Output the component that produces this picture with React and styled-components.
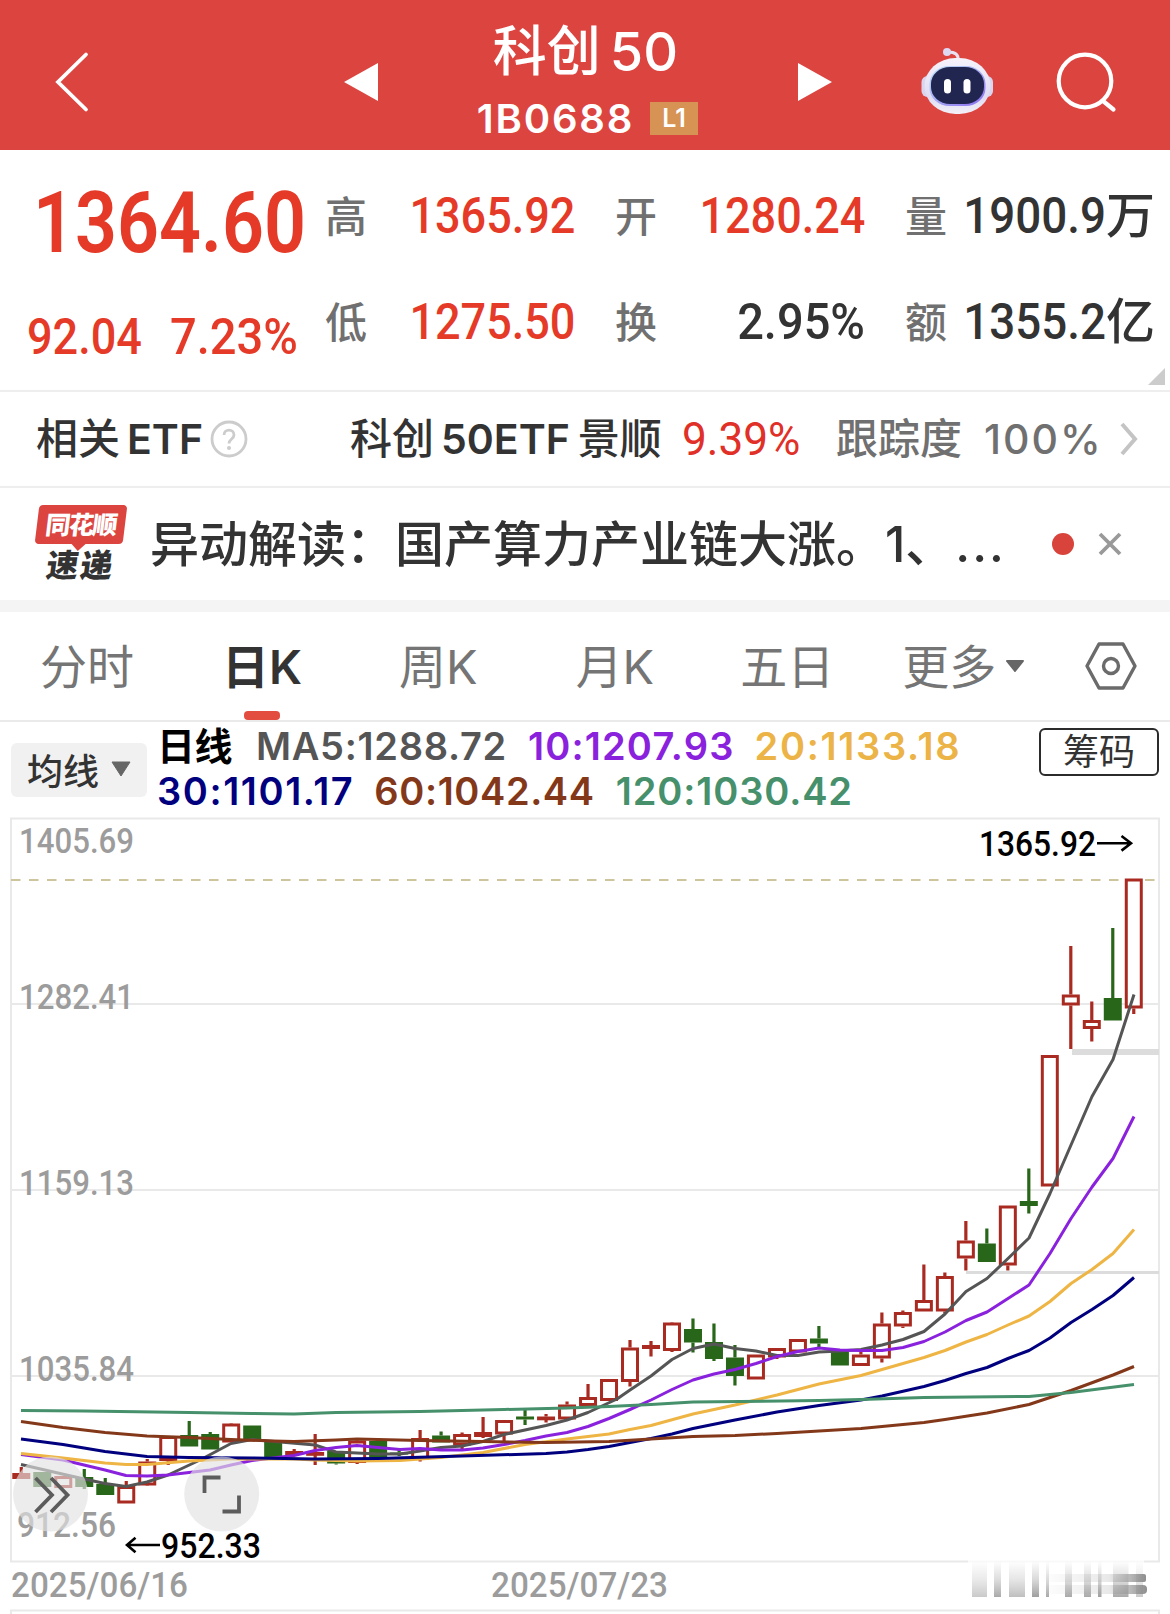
import React from 'react'
import styled, { createGlobalStyle } from 'styled-components'

const sans = `Inter, "Noto Sans CJK SC", sans-serif`
const din = `Roboto, "Noto Sans CJK SC", sans-serif`

// every candle: up / down, high, body top, body bottom, low
const candles = [
  ['u', 1467, 1473, 1479, 1479],
  ['d', 1472, 1472, 1487, 1487],
  ['u', 1476, 1476, 1488, 1488],
  ['d', 1469, 1477, 1487, 1489],
  ['d', 1478, 1484, 1495, 1495],
  ['u', 1481, 1486, 1503.5, 1503.5],
  ['u', 1459, 1461.5, 1485.5, 1486],
  ['u', 1436, 1436, 1461, 1465],
  ['d', 1421, 1435, 1446.5, 1446.5],
  ['d', 1432, 1434, 1449.5, 1449.5],
  ['u', 1423, 1423.5, 1442.5, 1442.5],
  ['d', 1425.5, 1425.5, 1439.5, 1439.5],
  ['d', 1441, 1441, 1457, 1457],
  ['u', 1449, 1451, 1455, 1455],
  ['u', 1434, 1452, 1455, 1465],
  ['d', 1451, 1451, 1463.5, 1464.5],
  ['u', 1440, 1440.5, 1463, 1464],
  ['d', 1441, 1441, 1459, 1459],
  ['d', 1450, 1452.5, 1454.5, 1456],
  ['u', 1430, 1438, 1460, 1461.5],
  ['d', 1431.5, 1435.5, 1442.5, 1442.5],
  ['u', 1432.5, 1434, 1445.5, 1449],
  ['u', 1417, 1432, 1437, 1438],
  ['u', 1420, 1420, 1434.5, 1441.5],
  ['d', 1410, 1416.5, 1419.5, 1425],
  ['u', 1414, 1416.5, 1420, 1422.5],
  ['u', 1401.5, 1404.5, 1419.5, 1419.5],
  ['u', 1384, 1397, 1406, 1406],
  ['u', 1379, 1379, 1401, 1401],
  ['u', 1340, 1347.5, 1382, 1386.5],
  ['u', 1341, 1345, 1349, 1356.5],
  ['u', 1322, 1322.5, 1351, 1352],
  ['d', 1318.5, 1329, 1342.5, 1352.5],
  ['d', 1323.5, 1342, 1359, 1361],
  ['d', 1345, 1357.5, 1376, 1385.5],
  ['u', 1354.5, 1354.5, 1379.5, 1379.5],
  ['u', 1348, 1348, 1357.5, 1359],
  ['u', 1339, 1339, 1352.5, 1352.5],
  ['d', 1326, 1338.5, 1343.5, 1347],
  ['d', 1351.5, 1351.5, 1365.5, 1365.5],
  ['u', 1352, 1354.5, 1366, 1366],
  ['u', 1312.5, 1323.5, 1358.5, 1362.5],
  ['u', 1310.5, 1312, 1326.5, 1328],
  ['u', 1264.5, 1300, 1311.5, 1311.5],
  ['u', 1272.5, 1276, 1311.5, 1313],
  ['u', 1221, 1240.5, 1258.5, 1270.5],
  ['d', 1228.5, 1243.5, 1262, 1262],
  ['u', 1205.5, 1205.5, 1265.5, 1270.5],
  ['d', 1168.5, 1201, 1206, 1213.5],
  ['u', 1055, 1055, 1186.5, 1186.5],
  ['u', 946, 994.5, 1005.5, 1049],
  ['u', 1001.5, 1020, 1029, 1041.5],
  ['d', 928, 998, 1020.5, 1020.5],
  ['u', 878.5, 878.5, 1008.5, 1014],
]

const averages = [
  { color: '#555555', points: '21,1464.5 84,1479 105,1483.5 126,1486.5 147,1482 168,1475 200,1460 231,1443.5 252,1439.5 315,1445 336,1452 357,1453 378,1454 400,1454 420,1451 441,1447.5 462,1446 483,1441.5 504,1434.5 525,1430 546,1425.5 567,1420 588,1412.5 617,1399 630,1390 651,1376 672,1359.5 693,1348.5 714,1344 735,1348.5 756,1351 777,1355.5 798,1355.5 819,1352 840,1351 861,1349.5 882,1345 903,1339.5 924,1331.5 945,1314 966,1291.5 987,1278.5 1008,1258.5 1029,1238 1050,1193.5 1071,1145 1092,1096.5 1113,1059.5 1134,994.5' },
  { color: '#8a22dd', points: '21,1454.5 63,1460 84,1465 105,1470 126,1475.5 147,1476 168,1475 210,1470 231,1465 252,1460.5 294,1455.5 315,1450.5 336,1447.5 357,1445.5 378,1447.5 400,1449.5 420,1448.5 441,1450 462,1450 483,1448 504,1444.5 525,1440.5 546,1436 567,1432.5 588,1426.5 609,1418.5 630,1409.5 651,1400 672,1389.5 693,1380 714,1374 735,1369.5 756,1363.5 777,1356.5 798,1351.5 819,1348 840,1350 861,1350.5 882,1350.5 903,1347.5 924,1341.5 945,1332 966,1320.5 987,1312 1008,1298.5 1029,1285 1050,1253.5 1071,1218.5 1092,1187 1113,1158.5 1134,1116.5' },
  { color: '#eeb544', points: '21,1453.5 63,1458 105,1463 126,1464.5 147,1464.5 189,1461 231,1459 294,1459 315,1460 357,1461 400,1460.5 441,1457.5 483,1452.5 525,1444.5 567,1439 609,1434 630,1429.5 651,1425.5 693,1414 735,1405 777,1395 819,1384 861,1375.5 882,1369.5 924,1357.5 945,1350.5 966,1342 987,1334.5 1008,1325 1029,1316 1050,1301.5 1071,1283.5 1092,1269.5 1113,1253.5 1134,1229.5' },
  { color: '#00007f', points: '21,1439 63,1444.5 105,1451.5 147,1456.5 189,1457.5 252,1458 315,1459 378,1458.5 462,1456 546,1453.5 567,1452 588,1449.5 609,1446.5 630,1442.5 651,1438.5 672,1434 693,1428.5 735,1420 777,1412 819,1405.5 861,1400 882,1396 924,1386.5 945,1380.5 966,1373.5 987,1367.5 1008,1358.5 1029,1350.5 1050,1338 1071,1322.5 1092,1309.5 1113,1295.5 1134,1277.5' },
  { color: '#84381a', points: '21,1421.5 63,1427.5 105,1432.5 147,1436 189,1437.5 231,1439.5 273,1441 294,1441.5 336,1440 357,1439 420,1440.5 483,1441.5 546,1442.5 609,1441.5 651,1439 693,1436.5 735,1435.5 777,1433.5 819,1431 861,1428.5 924,1422.5 945,1419.5 987,1413 1029,1404.5 1071,1390.5 1113,1375 1134,1366.5' },
  { color: '#46906c', points: '21,1410.5 84,1411 189,1412.5 252,1413.5 294,1414 336,1412.5 420,1411.5 504,1409.5 567,1408 609,1406.5 651,1404.5 693,1402 819,1400.5 861,1399.5 924,1397.5 1029,1396.5 1071,1392.5 1134,1384.5' },
]

const quotes = [
  { label: '高', value: '1365.92', up: true },
  { label: '开', value: '1280.24', up: true },
  { label: '量', value: '1900.9', unit: '万', squeeze: 0.915 },
  { label: '低', value: '1275.50', up: true },
  { label: '换', value: '2.95%', squeeze: 0.94 },
  { label: '额', value: '1355.2', unit: '亿', squeeze: 0.915 },
]

// baselines of the price labels on the left side
const prices = [
  ['1405.69', 853, 115],
  ['1282.41', 1008.5, 115],
  ['1159.13', 1194.5, 115],
  ['1035.84', 1380.5, 115],
]

// x, width and opacity of the smudged bars covering the last date
const smudges = [[972, 15, 0.5], [994, 7, 0.8], [1009, 16, 0.6], [1032, 7, 0.9], [1046, 3, 0.8], [1065, 7, 0.8], [1084, 7, 0.8], [1098, 3.5, 0.9], [1113, 15.5, 0.8], [1136, 7, 0.5]]

function Robot() {
  return (
    <svg width="74" height="70" viewBox="920 47 74 70">
      <defs>
        <linearGradient id="shell" x1="0" y1="0" x2="0" y2="1">
          <stop offset="0" stopColor="#f6f2fb" />
          <stop offset=".7" stopColor="#dfdcf3" />
          <stop offset="1" stopColor="#f3f0f8" />
        </linearGradient>
        <linearGradient id="rim" x1="0" y1="0" x2="1" y2="1">
          <stop offset="0" stopColor="#bfe4f5" />
          <stop offset="1" stopColor="#8b6cf0" />
        </linearGradient>
      </defs>
      <path d="M958 60 Q959 52 948 52" fill="none" stroke="#e9e0f2" strokeWidth="3" />
      <circle cx="947" cy="52" r="4" fill="#ded9f3" />
      <rect x="921.5" y="76" width="13" height="21" rx="6" fill="#d9d5ef" />
      <rect x="980" y="76" width="13" height="21" rx="6" fill="#d9d5ef" />
      <rect x="924.5" y="58" width="66" height="56" rx="31" ry="28" fill="url(#shell)" />
      <rect x="929.5" y="66" width="56" height="40" rx="20" ry="18" fill="url(#rim)" />
      <rect x="931" y="67" width="53" height="37" rx="19" ry="17" fill="#20264f" />
      <rect x="944" y="79" width="7" height="14.5" rx="3.5" fill="#fff" />
      <rect x="963.5" y="79" width="7" height="14.5" rx="3.5" fill="#fff" />
    </svg>
  )
}

function KChart() {
  return (
    <ChartSvg viewBox="0 817 1170 797">
      <defs>
        <linearGradient id="smudge" x1="0" y1="0" x2="0" y2="1">
          <stop offset="0" stopColor="#999" stopOpacity="0" />
          <stop offset=".5" stopColor="#999" stopOpacity=".4" />
          <stop offset="1" stopColor="#888" stopOpacity=".9" />
        </linearGradient>
        <linearGradient id="streak" x1="0" y1="0" x2="1" y2="0">
          <stop offset="0" stopColor="#999" stopOpacity="0" />
          <stop offset=".65" stopColor="#999" stopOpacity=".22" />
          <stop offset="1" stopColor="#888" stopOpacity=".95" />
        </linearGradient>
      </defs>
      <g fill="none" stroke="#e9e9e9" strokeWidth="2">
        <rect x="11" y="818.5" width="1148" height="743" />
        <path d="M11 1614 V1610.5 H1159 V1614" />
        <path d="M12 1004 H1158 M12 1190 H1158 M12 1376 H1158" />
      </g>
      <rect x="1072" y="1049" width="87" height="6" fill="#dcdcdc" />
      <rect x="966" y="1271" width="193" height="3" fill="#dcdcdc" />
      <path d="M11 880 H1158" stroke="#cfc59d" strokeWidth="2" strokeDasharray="9.5 8.5" />

      {prices.map(([text, y, width]) => (
        <AxisText key={text} x="19" y={y} textLength={width} lengthAdjust="spacingAndGlyphs">{text}</AxisText>
      ))}
      <AxisText x="17" y="1537" textLength="99" lengthAdjust="spacingAndGlyphs">912.56</AxisText>

      {candles.map(([dir, high, top, bottom, low], i) => {
        const x = 21.3 + i * 20.99
        const up = dir === 'u'
        const color = up ? '#a92a20' : '#28661a'
        const inner = up ? Math.max(bottom - top - 3, 0.8) : bottom - top
        return (
          <g key={i}>
            <path d={`M${x} ${high} V${top} M${x} ${bottom} V${low}`} stroke={color} strokeWidth="3.2" />
            {up
              ? <rect x={x - 7.5} y={top + 1.5} width="15" height={inner} fill="#fff" stroke={color} strokeWidth="3" />
              : <rect x={x - 9} y={top} width="18" height={inner} fill={color} />}
          </g>
        )
      })}
      {averages.map(line => (
        <polyline key={line.color} points={line.points} fill="none" stroke={line.color} strokeWidth="3" strokeLinejoin="round" />
      ))}

      <MarkText x="979" y="856" textLength="117" lengthAdjust="spacingAndGlyphs">1365.92</MarkText>
      <path d="M1097 843.3 H1131 M1121.5 836 L1131 843.3 L1121.5 850.6" fill="none" stroke="#000" strokeWidth="2.6" />
      <MarkText x="161" y="1558" textLength="100" lengthAdjust="spacingAndGlyphs">952.33</MarkText>
      <path d="M160 1545 H127 M135.5 1537.7 L127 1545 L135.5 1552.3" fill="none" stroke="#000" strokeWidth="2.6" />

      <AxisText x="11" y="1597" textLength="177" lengthAdjust="spacingAndGlyphs">2025/06/16</AxisText>
      <AxisText x="491" y="1597" textLength="177" lengthAdjust="spacingAndGlyphs">2025/07/23</AxisText>
      <rect x="968" y="1559" width="176" height="8" fill="#fff" opacity=".7" />
      {smudges.map(([x, width, opacity]) => (
        <rect key={x} x={x} y="1561" width={width} height="36" fill="url(#smudge)" opacity={opacity} />
      ))}
      <rect x="1040" y="1574" width="106" height="8" rx="2" fill="url(#streak)" />
      <rect x="1040" y="1585" width="107" height="9" rx="4" fill="url(#streak)" />

      <circle cx="50.5" cy="1494" r="37.5" fill="#e2e2e2" fillOpacity=".65" />
      <path d="M35.5 1478 L52 1495 L35.5 1512 M51 1478 L67.5 1495 L51 1512" fill="none" stroke="#5c5c5c" strokeWidth="3.8" />
      <circle cx="221.7" cy="1494" r="37.5" fill="#e2e2e2" fillOpacity=".65" />
      <path d="M204.5 1493 V1477.5 H220.5 M239 1495.5 V1511.5 H222.5" fill="none" stroke="#5c5c5c" strokeWidth="3.8" />
    </ChartSvg>
  )
}

function App() {
  return (
    <Page>
      <GlobalStyle />
      <Header>
        <svg width="34" height="62" viewBox="55 51 34 62">
          <path d="M86 54.5 L58 82 L86 109.5" fill="none" stroke="#fff" strokeWidth="3.8" strokeLinecap="round" />
        </svg>
        <Switcher>
          <svg width="34" height="38" viewBox="0 0 34 38"><path d="M0 19 L34 0 V38 Z" fill="#fff" /></svg>
          <Heading>
            <Name>科创<b>50</b></Name>
            <Code>1B0688<Level>L1</Level></Code>
          </Heading>
          <svg width="34" height="38" viewBox="0 0 34 38"><path d="M34 19 L0 0 V38 Z" fill="#fff" /></svg>
        </Switcher>
        <Robot />
        <svg width="62" height="62" viewBox="1055 51 62 62">
          <path d="M1103 101 L1113.5 109.5" stroke="#fff" strokeWidth="4.2" strokeLinecap="round" />
          <circle cx="1085" cy="81" r="26.3" fill="none" stroke="#fff" strokeWidth="4.2" />
        </svg>
      </Header>

      <Stats>
        <Latest>
          <Price>1364.60</Price>
          <Change>
            <Digits $up $left>92.04</Digits>
            <Digits $up $left $squeeze={0.94}>7.23%</Digits>
          </Change>
        </Latest>
        <Quotes>
          {quotes.map(q => (
            <Quote key={q.label}>
              <Label>{q.label}</Label>
              <Value><Digits $up={q.up} $squeeze={q.squeeze}>{q.value}</Digits>{q.unit && <Unit>{q.unit}</Unit>}</Value>
            </Quote>
          ))}
        </Quotes>
        <Corner />
      </Stats>

      <Etf>
        <Strong>相关<b>ETF</b></Strong>
        <Help width="38" height="38" viewBox="0 0 38 38">
          <circle cx="19" cy="19" r="17" fill="none" stroke="#ccc" strokeWidth="2.8" />
          <path d="M14 15 C14 8.5 24 8.5 24 15 C24 19 19 19 19 23.5" fill="none" stroke="#ccc" strokeWidth="2.8" />
          <circle cx="19" cy="28" r="2" fill="#ccc" />
        </Help>
        <Fund>科创<b>50ETF</b><b>景顺</b></Fund>
        <Gain>9.39%</Gain>
        <Track>跟踪度<span>100%</span></Track>
        <svg width="18" height="34" viewBox="0 0 18 34"><path d="M2 2 L15 17 L2 32" fill="none" stroke="#c4c4c4" strokeWidth="4" /></svg>
      </Etf>

      <News>
        <Brand>
          <BrandTop>同花顺</BrandTop>
          <BrandBottom>速递</BrandBottom>
        </Brand>
        <Headline>异动解读：国产算力产业链大涨。1、<Dots>...</Dots></Headline>
        <Dot />
        <svg width="24" height="24" viewBox="0 0 24 24"><path d="M2 2 L22 22 M22 2 L2 22" stroke="#999" strokeWidth="3.8" /></svg>
      </News>

      <Tabs>
        <Tab $gap={88}>分时</Tab>
        <Tab $active $gap={97}>日K</Tab>
        <Tab $gap={98}>周K</Tab>
        <Tab $gap={86}>月K</Tab>
        <Tab $gap={68}>五日</Tab>
        <Tab $gap={10}>更多</Tab>
        <svg width="18" height="12" viewBox="0 0 18 12"><path d="M1 1 H17 L9 11 Z" fill="#666" stroke="#666" strokeWidth="2" strokeLinejoin="round" /></svg>
        <Gear width="52" height="48" viewBox="0 0 52 48">
          <path d="M14 2 H38 L50 24 L38 46 H14 L2 24 Z" fill="none" stroke="#6b6b6b" strokeWidth="3.4" strokeLinejoin="round" />
          <circle cx="26" cy="24" r="7.5" fill="none" stroke="#6b6b6b" strokeWidth="3.4" />
        </Gear>
      </Tabs>

      <Legend>
        <Picker>
          均线
          <svg width="20" height="16" viewBox="0 0 20 16"><path d="M1 1 H19 L10 15 Z" fill="#666" stroke="#666" strokeLinejoin="round" /></svg>
        </Picker>
        <Lines>
          <Line>
            <Ma $color="#000" $gap={24} $space={-0.5}>日线</Ma>
            <Ma $color="#555" $gap={21} $space={0.7}>MA5:1288.72</Ma>
            <Ma $color="#8a22dd" $gap={20} $space={1.2}>10:1207.93</Ma>
            <Ma $color="#ecb346" $space={1.7}>20:1133.18</Ma>
          </Line>
          <Line>
            <Ma $color="#00007f" $gap={20} $space={1.6}>30:1101.17</Ma>
            <Ma $color="#84381a" $gap={21} $space={0.6}>60:1042.44</Ma>
            <Ma $color="#46906c" $space={0.9}>120:1030.42</Ma>
          </Line>
        </Lines>
        <Chips>筹码</Chips>
      </Legend>
      <KChart />
    </Page>
  )
}

export default App


const GlobalStyle = createGlobalStyle`
  * {
    box-sizing: border-box;
  }
  body {
    margin: 0;
    background: #fff;
  }
  svg {
    display: block;
    flex: none;
  }
`

const Page = styled.div`
  width: 1170px;
  height: 1614px;
  overflow: hidden;
  background: #fff;
  font-family: ${sans};
  color: #333;
  white-space: nowrap;
`

const Header = styled.header`
  display: flex;
  align-items: center;
  height: 150px;
  padding: 14px 53px 0 55px;
  background: #dc4440;
  color: #fff;
  > svg:nth-of-type(2) {
    margin: 0 61px 0 88px;
  }
`

const Switcher = styled.div`
  display: flex;
  align-items: center;
  justify-content: space-between;
  width: 488px;
  margin-left: 255px;
`

const Heading = styled.div`
  display: flex;
  flex-direction: column;
  align-items: flex-start;
  margin: -15px 0 0 -1px;
`

const Name = styled.div`
  height: 76px;
  margin: 12px 0 0 16px;
  font-size: 54px;
  font-weight: 500;
  line-height: 76px;
  > b {
    font-weight: 500;
    margin-left: 9px;
  }
`

const Code = styled.div`
  display: flex;
  align-items: center;
  font-size: 40px;
  font-weight: 600;
  line-height: 57px;
  letter-spacing: 1.8px;
`

const Level = styled.span`
  width: 48px;
  height: 33px;
  margin-left: 16px;
  background: #d69354;
  font-size: 25px;
  line-height: 33px;
  letter-spacing: 0;
  text-align: center;
`

const Stats = styled.section`
  position: relative;
  display: flex;
  height: 242px;
  border-bottom: 2px solid #eee;
`

const Latest = styled.div`
  width: 325px;
  padding: 23px 0 0 33px;
`

const Price = styled.div`
  font: 600 85px/100px ${din};
  color: #e53a28;
  transform: scaleX(0.865);
  transform-origin: left;
`

const Change = styled.div`
  display: flex;
  gap: 15px;
  margin: 34px 0 0 -6px;
  height: 60px;
`

const Digits = styled.span`
  display: inline-block;
  font: 500 50px/60px ${din};
  color: ${p => (p.$up ? '#e53a28' : '#333')};
  transform: scaleX(${p => p.$squeeze || 0.9});
  transform-origin: ${p => (p.$left ? 'left' : 'right')};
`

const Quotes = styled.div`
  display: grid;
  grid-template-columns: repeat(3, 250px);
  grid-auto-rows: 106px;
  column-gap: 40px;
  padding-top: 13px;
`

const Quote = styled.div`
  display: flex;
  align-items: center;
  justify-content: space-between;
`

const Label = styled.span`
  width: 42px;
  padding-top: 2px;
  font-size: 42px;
  font-weight: 500;
  line-height: 60px;
  color: #707070;
`

const Value = styled.span`
  display: flex;
  justify-content: flex-end;
  align-items: center;
  width: 200px;
`

const Unit = styled.span`
  font-size: 49px;
  font-weight: 500;
  line-height: 62px;
`

const Corner = styled.i`
  position: absolute;
  right: 5px;
  bottom: 5px;
  border-style: solid;
  border-width: 0 0 17px 17px;
  border-color: transparent transparent #ccc transparent;
`

const Etf = styled.section`
  display: flex;
  align-items: center;
  height: 96px;
  padding: 0 34px 0 36px;
  border-bottom: 2px solid #eee;
  font-size: 42px;
  line-height: 60px;
`

const Strong = styled.span`
  flex: none;
  width: 174px;
  font-weight: 500;
  > b {
    margin-left: 7px;
    font-size: 41px;
    font-weight: 600;
  }
`

const Help = styled.svg`
  margin-right: 102px;
`

const Fund = styled(Strong)`
  width: 332px;
  > b:last-child {
    font-size: 42px;
    font-weight: 500;
    margin-left: 8px;
  }
`

const Gain = styled.span`
  flex: none;
  width: 154px;
  font: 400 46px/60px ${din};
  color: #e03028;
  transform: scaleX(0.96);
  transform-origin: left;
`

const Track = styled.span`
  flex: none;
  width: 284px;
  font-weight: 500;
  color: #707070;
  > span {
    margin-left: 22px;
    font-size: 41px;
    letter-spacing: 2px;
  }
`

const News = styled.section`
  display: flex;
  align-items: center;
  height: 124px;
  padding-left: 37px;
  border-bottom: 12px solid #f4f4f4;
`

const Brand = styled.div`
  width: 88px;
  margin: -1px 25px 0 0;
  text-align: center;
`

const BrandTop = styled.div`
  position: relative;
  height: 39px;
  border-radius: 4px;
  background: #dc4440;
  color: #fff;
  font-size: 25px;
  font-weight: 900;
  line-height: 41px;
  letter-spacing: -1.5px;
  transform: skewX(-7deg);
  &:after {
    content: '';
    position: absolute;
    left: 36px;
    top: 38px;
    border: 8px solid transparent;
    border-top-color: #dc4440;
    border-bottom: 0;
  }
`

const BrandBottom = styled.div`
  margin: 5px 0 0 -1px;
  font-size: 32px;
  font-weight: 900;
  line-height: 34px;
  letter-spacing: 2px;
  transform: skewX(-8deg);
`

const Headline = styled.div`
  width: 902px;
  padding-top: 1px;
  font-size: 49px;
  font-weight: 500;
  line-height: 70px;
`

const Dots = styled.span`
  margin-left: 1px;
  letter-spacing: 2px;
`

const Dot = styled.i`
  width: 22px;
  height: 22px;
  margin-right: 24px;
  border-radius: 50%;
  background: #d8433c;
`

const Tabs = styled.nav`
  display: flex;
  align-items: center;
  height: 110px;
  padding-left: 40px;
  border-bottom: 2px solid #eaeaea;
`

const Tab = styled.div`
  position: relative;
  flex: none;
  margin-right: ${p => p.$gap}px;
  padding-top: 1px;
  font-size: 47px;
  line-height: 107px;
  color: ${p => (p.$active ? '#333' : '#757575')};
  font-weight: ${p => (p.$active ? 600 : 400)};
  &:after {
    content: '';
    display: ${p => (p.$active ? 'block' : 'none')};
    position: absolute;
    left: calc(50% - 18px);
    bottom: 0;
    width: 36px;
    height: 9px;
    border-radius: 4px;
    background: #e34d3f;
  }
`

const Gear = styled.svg`
  margin-left: 61px;
`

const Legend = styled.section`
  display: flex;
  height: 95px;
  padding: 0 11px;
`

const Picker = styled.div`
  display: flex;
  align-items: center;
  gap: 12px;
  width: 136px;
  height: 54px;
  margin-top: 21px;
  padding: 0 0 3px 16px;
  border-radius: 6px;
  background: #f1f1f1;
  font-size: 36px;
  font-weight: 500;
`

const Lines = styled.div`
  width: 892px;
  padding: 2px 0 0 10px;
`

const Line = styled.div`
  display: flex;
  height: 45px;
  line-height: 45px;
`

const Ma = styled.span`
  margin-right: ${p => p.$gap || 0}px;
  font-size: 38px;
  font-weight: 600;
  letter-spacing: ${p => p.$space}px;
  color: ${p => p.$color};
`

const Chips = styled.div`
  width: 120px;
  height: 48px;
  margin-top: 6px;
  border: 2px solid #2b2b2b;
  border-radius: 6px;
  font-size: 36px;
  line-height: 44px;
  text-align: center;
`

const ChartSvg = styled.svg`
  width: 1170px;
  height: 797px;
`

const AxisText = styled.text`
  font: 500 35px ${din};
  fill: #9c9c9c;
`

const MarkText = styled.text`
  font: 500 35px ${din};
  fill: #000;
`
